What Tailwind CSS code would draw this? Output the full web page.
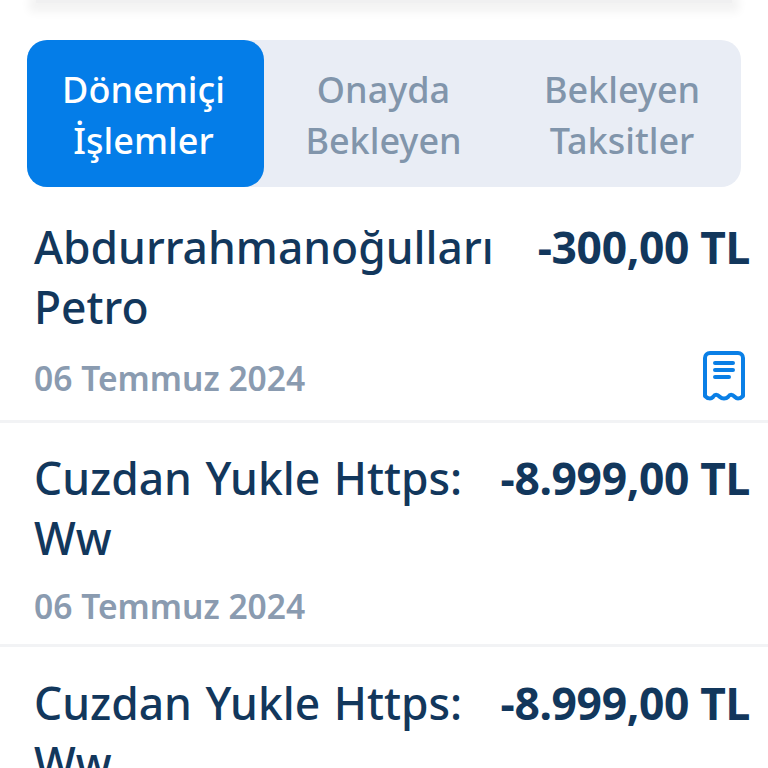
<!DOCTYPE html>
<html lang="tr">

<head>
  <meta charset="UTF-8">
  <meta name="viewport" content="width=device-width, initial-scale=1.0">
  <title>Hesap Hareketleri</title>
  <script src="https://cdn.jsdelivr.net/npm/@tailwindcss/browser@4"></script>
</head>

<body class="w-[768px] h-[768px] overflow-hidden bg-white font-['Noto_Sans','Open_Sans',sans-serif]">

  <!-- ust kart -->
  <div class="mx-[36px] h-[3px] bg-[#f0f0f1] shadow-[0_2px_10px_7px_rgba(0,0,0,0.05)]"></div>

  <!-- sekmeler -->
  <div class="mt-[37px] mx-[27px] w-[714px] h-[147px] flex rounded-[20px] bg-[#e9edf5] text-[36px] leading-[51px] font-medium text-center text-[#8195ab]">
    <div class="w-[237px] pr-[4px] pt-[2px] flex items-center justify-center rounded-[20px] bg-[#047de8] text-white">Dönemiçi<br>İşlemler</div>
    <div class="w-[239px] pt-[2px] flex items-center justify-center">Onayda<br>Bekleyen</div>
    <div class="w-[238px] pt-[2px] flex items-center justify-center">Bekleyen<br>Taksitler</div>
  </div>

  <!-- islemler -->
  <div class="text-[#12375c]">
    <div class="h-[236px] pt-[30px] pl-[34px] pr-[18px] border-b-[3px] border-[#f2f3f5]">
      <div class="flex justify-between text-[44.4px] leading-[60px] font-medium">
        <div class="w-[470px]">Abdurrahmanoğulları Petro</div>
        <div class="font-bold tracking-[-0.35px] whitespace-nowrap">-300,00 TL</div>
      </div>
      <div class="mt-[14px] flex items-start justify-between">
        <div class="mt-[5px] text-[33.6px] leading-[45px] font-semibold text-[#8a9bb0]">06 Temmuz 2024</div>
        <svg class="w-[42px] h-[50px] mr-[5px]" viewBox="0 0 42 50" fill="none" stroke="#0a7fe6" stroke-width="4" stroke-linecap="round" stroke-linejoin="round">
          <path d="M7 2h28a5 5 0 0 1 5 5v38c-3 3-6 3-8 1c-3-3-5-3-7 0c-2 2-6 2-8 0c-3-3-5-3-7 0c-2 2-5 2-8-1V7a5 5 0 0 1 5-5z"/>
          <path d="M12 12h18M12 19h18M12 26h14"/>
        </svg>
      </div>
    </div>

    <div class="h-[224px] pt-[25px] pl-[34px] pr-[18px] border-b-[3px] border-[#f2f3f5]">
      <div class="flex justify-between text-[44.4px] leading-[60px] font-medium">
        <div class="w-[440px] [word-spacing:2px]">Cuzdan Yukle Https: Ww</div>
        <div class="font-bold tracking-[-0.35px] whitespace-nowrap">-8.999,00 TL</div>
      </div>
      <div class="mt-[16px] text-[33.6px] leading-[45px] font-semibold text-[#8a9bb0]">06 Temmuz 2024</div>
    </div>

    <div class="pt-[26px] pl-[34px] pr-[18px]">
      <div class="flex justify-between text-[44.4px] leading-[60px] font-medium">
        <div class="w-[440px] [word-spacing:2px]">Cuzdan Yukle Https: Ww</div>
        <div class="font-bold tracking-[-0.35px] whitespace-nowrap">-8.999,00 TL</div>
      </div>
    </div>
  </div>

</body>

</html>
